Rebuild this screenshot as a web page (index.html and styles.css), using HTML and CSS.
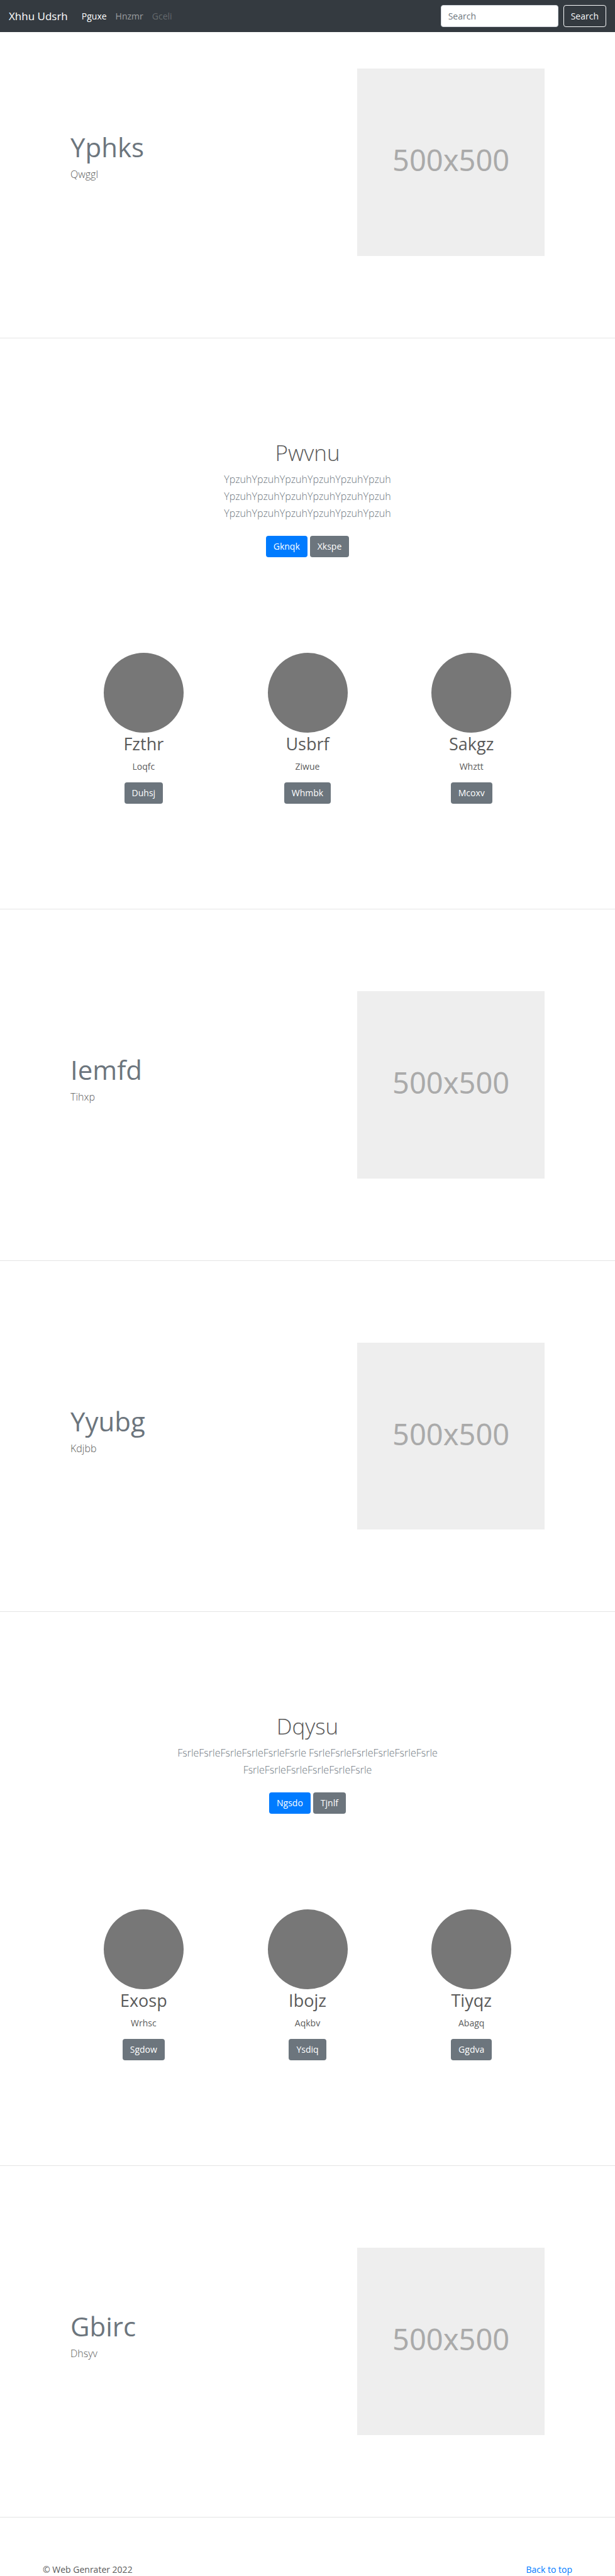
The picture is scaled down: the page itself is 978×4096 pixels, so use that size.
FILE: index.html
```html
<!DOCTYPE html>
<html lang="en">
<head>
<meta charset="utf-8">
<meta name="viewport" content="width=device-width, initial-scale=1">
<title>Xhhu Udsrh</title>
<link rel="stylesheet" href="styles.css">
</head>
<body>
<header class="navbar" id="top">
  <a class="brand" href="#top">Xhhu Udsrh</a>
  <nav class="nav">
    <a class="nav-link active" href="#">Pguxe</a>
    <a class="nav-link" href="#">Hnzmr</a>
    <a class="nav-link disabled" aria-disabled="true" href="#">Gceli</a>
  </nav>
  <form class="search">
    <input class="search-input" type="search" placeholder="Search" aria-label="Search">
    <button class="btn btn-outline" type="submit">Search</button>
  </form>
</header>
<main>
  <section class="container feature">
    <div class="row">
      <div class="feature-text"><h2 class="feature-title">Yphks</h2><p class="lead">Qwggl</p></div>
      <div class="feature-media"><div class="placeholder">500x500</div></div>
    </div>
  </section>
  <hr class="divider">
  <section class="intro">
    <h1 class="intro-title">Pwvnu</h1>
    <p class="lead intro-lead">YpzuhYpzuhYpzuhYpzuhYpzuhYpzuh YpzuhYpzuhYpzuhYpzuhYpzuhYpzuh YpzuhYpzuhYpzuhYpzuhYpzuhYpzuh</p>
    <div class="actions"><button class="btn btn-primary">Gknqk</button><button class="btn btn-secondary">Xkspe</button></div>
  </section>
  <section class="container team">
    <div class="row">
      <article class="member"><div class="avatar"></div><h2 class="member-name">Fzthr</h2><p class="member-text">Loqfc</p><button class="btn btn-secondary">Duhsj</button></article>
      <article class="member"><div class="avatar"></div><h2 class="member-name">Usbrf</h2><p class="member-text">Ziwue</p><button class="btn btn-secondary">Whmbk</button></article>
      <article class="member"><div class="avatar"></div><h2 class="member-name">Sakgz</h2><p class="member-text">Whztt</p><button class="btn btn-secondary">Mcoxv</button></article>
    </div>
  </section>
  <hr class="divider">
  <section class="container feature">
    <div class="row">
      <div class="feature-text"><h2 class="feature-title">Iemfd</h2><p class="lead">Tihxp</p></div>
      <div class="feature-media"><div class="placeholder">500x500</div></div>
    </div>
  </section>
  <hr class="divider">
  <section class="container feature">
    <div class="row">
      <div class="feature-text"><h2 class="feature-title">Yyubg</h2><p class="lead">Kdjbb</p></div>
      <div class="feature-media"><div class="placeholder">500x500</div></div>
    </div>
  </section>
  <hr class="divider">
  <section class="intro">
    <h1 class="intro-title">Dqysu</h1>
    <p class="lead intro-lead">FsrleFsrleFsrleFsrleFsrleFsrle FsrleFsrleFsrleFsrleFsrleFsrle FsrleFsrleFsrleFsrleFsrleFsrle</p>
    <div class="actions"><button class="btn btn-primary">Ngsdo</button><button class="btn btn-secondary">Tjnlf</button></div>
  </section>
  <section class="container team">
    <div class="row">
      <article class="member"><div class="avatar"></div><h2 class="member-name">Exosp</h2><p class="member-text">Wrhsc</p><button class="btn btn-secondary">Sgdow</button></article>
      <article class="member"><div class="avatar"></div><h2 class="member-name">Ibojz</h2><p class="member-text">Aqkbv</p><button class="btn btn-secondary">Ysdiq</button></article>
      <article class="member"><div class="avatar"></div><h2 class="member-name">Tiyqz</h2><p class="member-text">Abagq</p><button class="btn btn-secondary">Ggdva</button></article>
    </div>
  </section>
  <hr class="divider">
  <section class="container feature">
    <div class="row">
      <div class="feature-text"><h2 class="feature-title">Gbirc</h2><p class="lead">Dhsyv</p></div>
      <div class="feature-media"><div class="placeholder">500x500</div></div>
    </div>
  </section>
  <hr class="divider">
</main>
<footer class="container footer">
  <p class="copyright">© Web Genrater 2022</p>
  <a class="top-link" href="#top">Back to top</a>
</footer>
</body>
</html>
```
FILE: styles.css
```css
* {
  box-sizing: border-box;
}

body {
  margin: 0;
  background: #fff;
  color: #5a5a5a;
  font-family: "Segoe UI", "Open Sans", "Noto Sans", sans-serif;
  font-size: 14px;
  line-height: 22px;
}

h1, h2, p {
  margin: 0;
}

a {
  text-decoration: none;
}

.navbar {
  display: flex;
  align-items: center;
  padding: 8px 14px;
  background: #343a40;
}

.brand {
  margin-right: 22px;
  color: #fff;
  font-size: 17px;
  line-height: 26px;
}

.nav {
  display: flex;
  flex: 1;
  gap: 14px;
}

.nav-link {
  color: rgba(255, 255, 255, 0.5);
}

.nav-link.active {
  color: #fff;
}

.nav-link.disabled {
  color: rgba(255, 255, 255, 0.25);
}

.search {
  display: flex;
  gap: 8px;
}

.search-input {
  width: 187px;
  height: 35px;
  padding: 0 11px;
  border: 1px solid #ced4da;
  border-radius: 4px;
  background: #fff;
  color: #495057;
  font: inherit;
}

.search-input::placeholder {
  color: #6c757d;
}

.btn {
  height: 34px;
  padding: 0 11px;
  border: 1px solid transparent;
  border-radius: 4px;
  color: #fff;
  font: inherit;
  cursor: pointer;
}

.btn-outline {
  height: 35px;
  border-color: #f8f9fa;
  background: transparent;
  color: #f8f9fa;
}

.btn-primary {
  background: #007bff;
}

.btn-secondary {
  background: #6c757d;
}

.container {
  max-width: 870px;
  margin: 0 auto;
  padding: 0 14px;
}

.row {
  display: flex;
  margin: 0 30px;
}

.feature {
  padding-top: 58px;
  padding-bottom: 58px;
}

.feature-text {
  flex: 1;
  padding: 102px 14px 0;
}

.feature-title {
  margin-bottom: 8px;
  color: #6c757d;
  font-size: 42px;
  font-weight: 400;
  line-height: 45px;
}

.feature-media {
  flex: 0 0 calc(100% * 5 / 12);
  padding: 0 14px;
}

.placeholder {
  display: flex;
  align-items: center;
  justify-content: center;
  aspect-ratio: 1;
  padding-bottom: 8px;
  background: #eee;
  color: #aaa;
  font-family: "Noto Sans", sans-serif;
  font-size: 47px;
}

.lead {
  font-size: 16px;
  font-weight: 300;
  line-height: 27px;
}

.divider {
  height: 1px;
  margin: 72px 0;
  border: 0;
  background: #e5e5e5;
}

.intro {
  max-width: 450px;
  margin: 0 auto;
  padding-top: 88px;
  text-align: center;
}

.intro-title {
  margin-bottom: 8px;
  font-size: 35px;
  font-weight: 300;
  line-height: 43px;
}

.intro-lead {
  color: #6c757d;
}

.actions {
  display: flex;
  justify-content: center;
  gap: 4px;
  margin-top: 22px;
}

.team {
  padding-top: 152px;
  padding-bottom: 95px;
}

.member {
  flex: 1;
  text-align: center;
}

.avatar {
  width: 127px;
  height: 127px;
  margin: 0 auto;
  border-radius: 50%;
  background: #777;
}

.member-name {
  margin-bottom: 8px;
  font-size: 27px;
  font-weight: 400;
  line-height: 35px;
}

.member-text {
  margin-bottom: 14px;
}

.footer {
  display: flex;
  justify-content: space-between;
}

.top-link {
  color: #007bff;
}
```
